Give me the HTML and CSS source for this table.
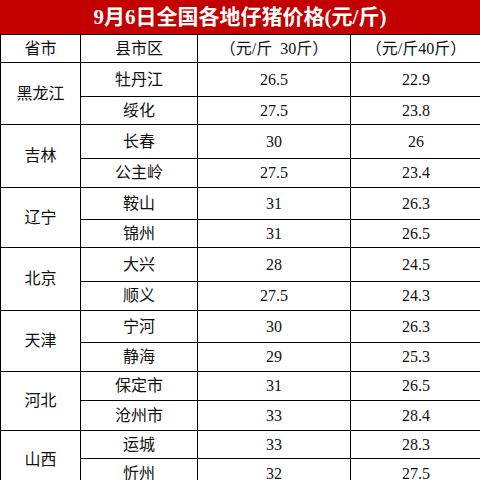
FILE: index.html
```html
<!DOCTYPE html>
<html lang="zh">
<head>
<meta charset="utf-8">
<link rel="stylesheet" href="styles.css">
</head>
<body>
<div class="title">9月6日全国各地仔猪价格(元/斤)</div>
<table class="price">
  <colgroup>
    <col class="c1"><col class="c2"><col class="c3"><col class="c4">
  </colgroup>
  <tr class="head h28"><td>省市</td><td>县市区</td><td>（元/斤&nbsp;&nbsp;30斤）</td><td>（元/斤40斤）</td></tr>
  <tr class="h34"><td rowspan="2">黑龙江</td><td>牡丹江</td><td>26.5</td><td>22.9</td></tr>
  <tr class="h28"><td>绥化</td><td>27.5</td><td>23.8</td></tr>
  <tr class="h34"><td rowspan="2">吉林</td><td>长春</td><td>30</td><td>26</td></tr>
  <tr class="h29"><td>公主岭</td><td>27.5</td><td>23.4</td></tr>
  <tr class="h32"><td rowspan="2">辽宁</td><td>鞍山</td><td>31</td><td>26.3</td></tr>
  <tr class="h28"><td>锦州</td><td>31</td><td>26.5</td></tr>
  <tr class="h34"><td rowspan="2">北京</td><td>大兴</td><td>28</td><td>24.5</td></tr>
  <tr class="h29"><td>顺义</td><td>27.5</td><td>24.3</td></tr>
  <tr class="h32"><td rowspan="2">天津</td><td>宁河</td><td>30</td><td>26.3</td></tr>
  <tr class="h29"><td>静海</td><td>29</td><td>25.3</td></tr>
  <tr class="h29"><td rowspan="2">河北</td><td>保定市</td><td>31</td><td>26.5</td></tr>
  <tr class="h30"><td>沧州市</td><td>33</td><td>28.4</td></tr>
  <tr class="h28"><td rowspan="2">山西</td><td>运城</td><td>33</td><td>28.3</td></tr>
  <tr class="h30"><td>忻州</td><td>32</td><td>27.5</td></tr>
</table>
</body>
</html>
```
FILE: styles.css
```css
html, body {
  margin: 0;
  padding: 0;
  background: #fff;
}
body {
  width: 480px;
  height: 480px;
  overflow: hidden;
  font-family: "Liberation Serif", "Noto Sans CJK SC", serif;
}
.title {
  height: 34px;
  line-height: 34px;
  background: #c30000;
  color: #fff;
  text-align: center;
  font-size: 21px;
  font-weight: bold;
  white-space: nowrap;
}
.price {
  border-collapse: collapse;
  table-layout: fixed;
  width: 481px;
  font-size: 16px;
  color: #111;
}
.c1 { width: 80px; }
.c2 { width: 117px; }
.c3 { width: 153px; }
.c4 { width: 131px; }
.price td {
  border: 1px solid #000;
  padding: 0;
  text-align: center;
  vertical-align: middle;
  white-space: nowrap;
  line-height: 18px;
}
.h28 td { height: 27px; }
.h29 td { height: 28px; }
.h30 td { height: 29px; }
.h32 td { height: 31px; }
.h34 td { height: 33px; }
.price td[rowspan] { height: auto; }
```
